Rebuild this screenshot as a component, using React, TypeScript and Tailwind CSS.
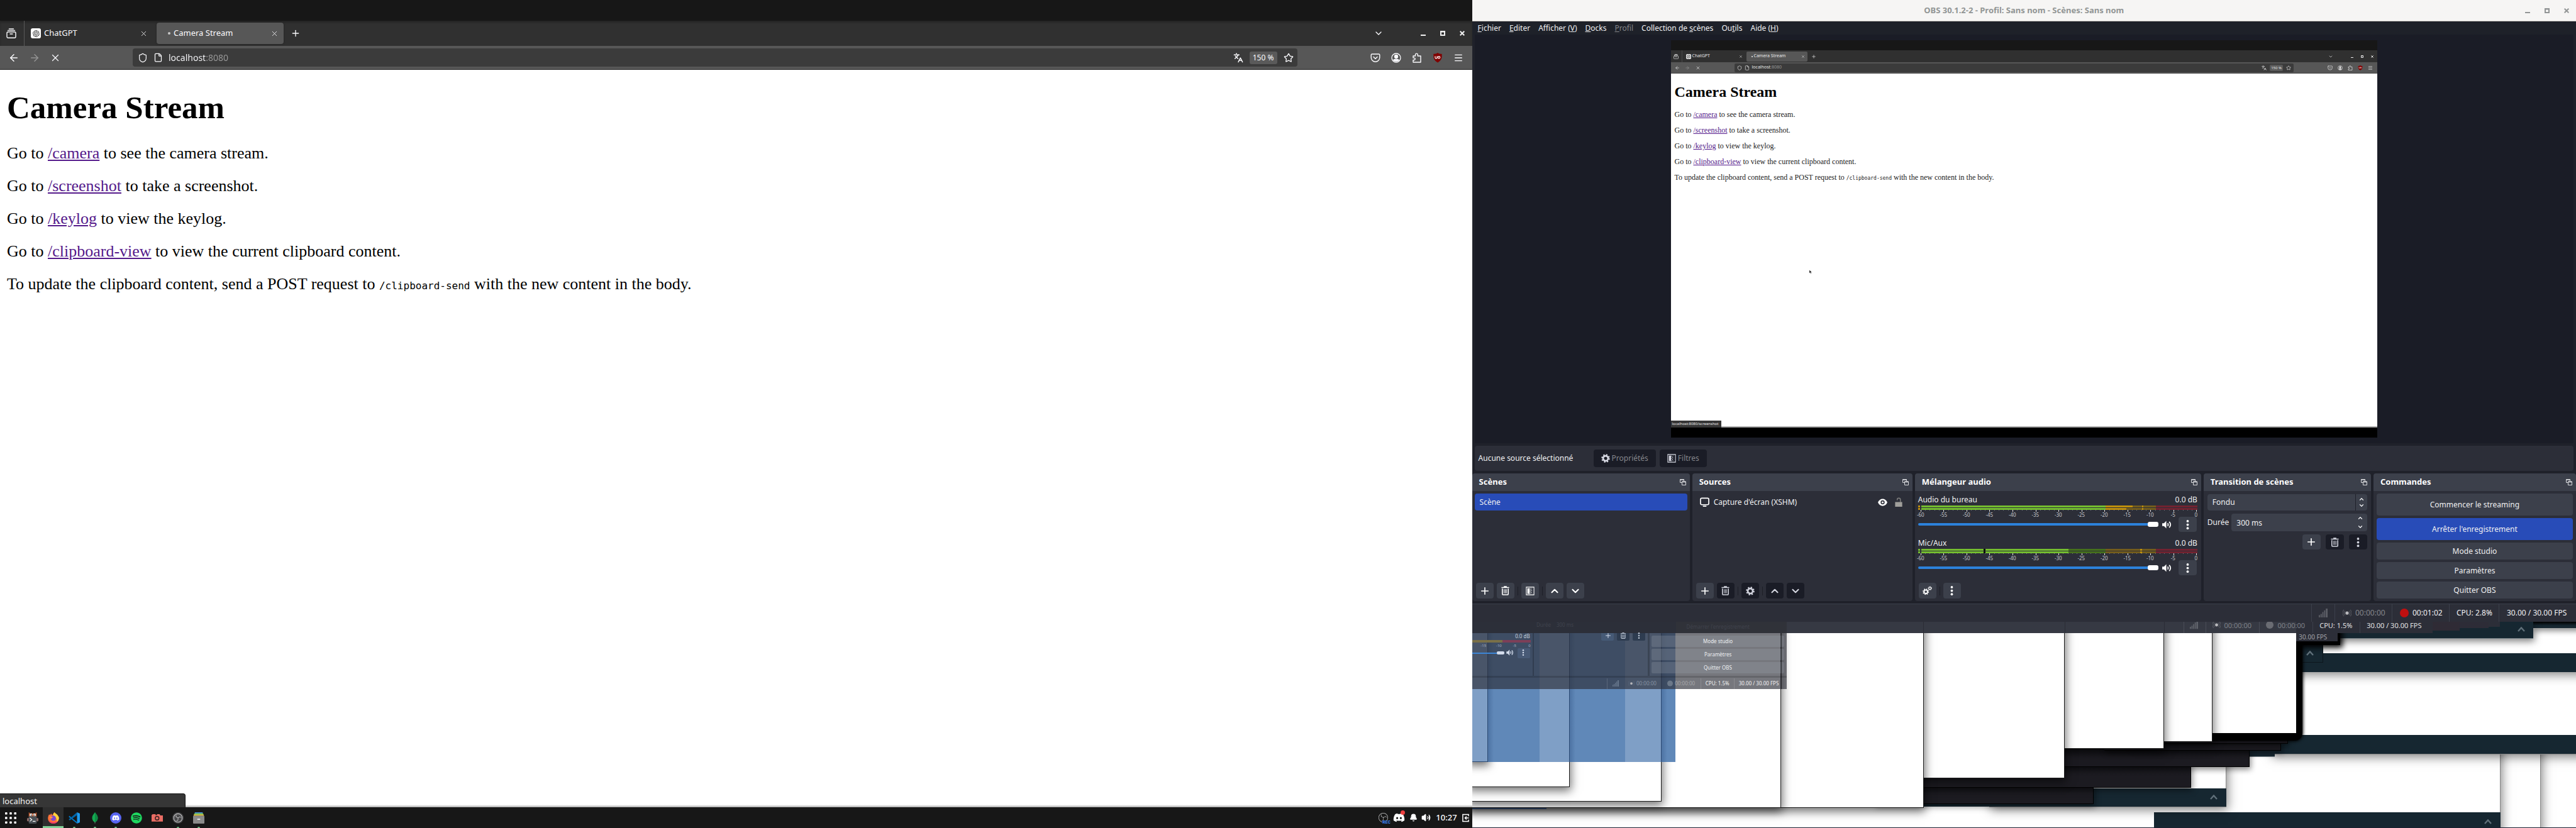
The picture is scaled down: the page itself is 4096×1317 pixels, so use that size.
import React from "react";
import {
  ArrowLeft, ArrowRight, X, Plus, Shield, File, ChevronDown, ChevronUp, Languages, Star, Menu,
  Bell, Volume2,
} from "lucide-react";
import { FaDiscord, FaSpotify } from "react-icons/fa";
import { SiObsstudio } from "react-icons/si";
import { RiOpenaiFill } from "react-icons/ri";

type P = { className?: string };
const noop = () => {};

/* ---------- small drawings ---------- */

const FirefoxView = ({ className = "" }: P) => (
  <svg viewBox="0 0 16 16" className={className} fill="none" stroke="currentColor" strokeWidth="1.4" strokeLinecap="round">
    <path d="M4.5 1h7M2.5 3.4h11" />
    <rect x="1" y="5.8" width="14" height="9.5" rx="2" />
    <path d="M6 9h4" />
  </svg>
);

const Pocket = ({ className = "" }: P) => (
  <svg viewBox="0 0 16 16" className={className} fill="none" stroke="currentColor" strokeWidth="1.4" strokeLinecap="round" strokeLinejoin="round">
    <path d="M2.5 2h11a1.3 1.3 0 0 1 1.3 1.3V7.5a6.8 6.8 0 0 1-13.6 0V3.3A1.3 1.3 0 0 1 2.5 2z" />
    <path d="M5 6.500l3 3 3-3" />
  </svg>
);

const Account = ({ className = "" }: P) => (
  <svg viewBox="0 0 16 16" className={className} fill="none" stroke="currentColor" strokeWidth="1.3">
    <circle cx="8" cy="8" r="7" />
    <circle cx="8" cy="6" r="2.5" fill="currentColor" />
    <path d="M3.8 11.5c1-1.8 7.400-1.8 8.400 0-1.8 2.2-6.600 2.2-8.400 0z" fill="currentColor" />
  </svg>
);

const Extension = ({ className = "" }: P) => (
  <svg viewBox="0 0 16 16" className={className} fill="none" stroke="currentColor" strokeWidth="1.4" strokeLinejoin="round">
    <path d="M2 5h3.500V3a1.900 1.900 0 0 1 3.800 0v2H14v10H2v-3.500h1.500a1.700 1.700 0 0 0 0-3.400H2z" />
  </svg>
);

const UBlock = ({ className = "" }: P) => (
  <svg viewBox="0 0 16 18" className={className}>
    <path d="M8 0c2.400 1.700 5 2.100 7.500 2.100 0 7.400 0 11-7.500 15.400C.5 13.100.5 9.500.5 2.100 3 2.100 5.600 1.700 8 0z" fill="#800000" />
    <path d="M3.500 6v2.600a1.700 1.700 0 0 0 3.400 0V6" fill="none" stroke="#fff" strokeWidth="1.3" />
    <circle cx="10.300" cy="8.200" r="1.900" fill="none" stroke="#fff" strokeWidth="1.3" />
  </svg>
);

const WinButtons = ({ className = "", small = false }: { className?: string; small?: boolean }) => (
  <div className={`flex items-center ${className}`}>
    {["Réduire", "Agrandir", "Fermer"].map((n, i) => (
      <button key={n} aria-label={n} className={small ? "w-4 flex justify-center" : "w-[31px] flex justify-center"}>
        <svg viewBox="0 0 8 8" className={small ? "w-1 h-1" : "w-2 h-2"} fill="none" stroke="currentColor" strokeWidth="2">
          {i === 0 && <path d="M0 7h8" />}
          {i === 1 && <path d="M1 1h6v6H1zM1 1.500h6" />}
          {i === 2 && <path d="M.7.7l6.600 6.600M7.300.7L.7 7.300" />}
        </svg>
      </button>
    ))}
  </div>
);

const Gear = ({ className = "" }: P) => (
  <svg viewBox="0 0 16 16" className={className}>
    <circle cx="8" cy="8" r="4.500" fill="none" stroke="currentColor" strokeWidth="3" />
    <circle cx="8" cy="8" r="6.600" fill="none" stroke="currentColor" strokeWidth="2.400" strokeDasharray="2.600 2.584" />
  </svg>
);

const Gears = ({ className = "" }: P) => (
  <svg viewBox="0 0 16 16" className={className} fill="none" stroke="currentColor">
    <circle cx="5.500" cy="9.800" r="3" strokeWidth="2" />
    <circle cx="5.500" cy="9.800" r="4.600" strokeWidth="1.600" strokeDasharray="1.800 1.813" />
    <circle cx="12.500" cy="4" r="2" strokeWidth="1.300" />
    <circle cx="12.500" cy="4" r="3" strokeWidth="1" strokeDasharray="1.200 1.156" />
  </svg>
);

const Filter = ({ className = "" }: P) => (
  <svg viewBox="0 0 16 16" className={className} fill="currentColor">
    <path d="M1 1h14v14H1z" fill="none" stroke="currentColor" strokeWidth="1.200" />
    <path d="M3 3h4v10H3z" />
    <path d="M7.500 3h1v2h-1zM7.500 7h1v2h-1zM7.500 11h1v2h-1zM9 5h1v2H9zM9 9h1v2H9zM10.500 3h1v1h-1zM10.500 7h1v1h-1zM10.500 11h1v1h-1z" />
  </svg>
);

const Trash = ({ className = "" }: P) => (
  <svg viewBox="0 0 16 16" className={className} fill="none" stroke="currentColor">
    <path d="M1.500 2.600h13M5.500 1h5" strokeWidth="1.600" />
    <path d="M3 4.500v9a1.500 1.500 0 0 0 1.500 1.500h7a1.500 1.500 0 0 0 1.500-1.500v-9" strokeWidth="1.700" />
    <path d="M6 5.500v7M8 5.500v7M10 5.500v7" strokeWidth="1" />
  </svg>
);

const Dots = ({ className = "" }: P) => (
  <svg viewBox="0 0 16 16" className={className} fill="currentColor">
    <circle cx="8" cy="2" r="2" /><circle cx="8" cy="8" r="2" /><circle cx="8" cy="14" r="2" />
  </svg>
);

const Popout = ({ className = "" }: P) => (
  <svg viewBox="0 0 10 10" className={className} fill="none" stroke="#d8d9dc" strokeWidth="1">
    <path d="M3.500 5.500h-3v-5h6v3" /><path d="M.5 1h6" strokeWidth="1.500" />
    <path d="M3.500 4h6v5.500h-6z" /><path d="M3.500 4.500h6" strokeWidth="1.500" />
  </svg>
);

const Speaker = ({ className = "" }: P) => (
  <svg viewBox="0 0 16 14" className={className}>
    <path d="M0 4.500h3L7 .5v13L3 9.500H0z" fill="currentColor" />
    <path d="M9.300 4.500c1 1.500 1 3.500 0 5M12 2c2.600 3 2.600 7 0 10" fill="none" stroke="currentColor" strokeWidth="1.900" />
  </svg>
);

const Signal = ({ className = "" }: P) => (
  <svg viewBox="0 0 15 15" className={className} fill="currentColor">
    <path d="M0 11h2v4H0zM3 9h2v6H3zM6 6h2v9H6zM9 3h2v12H9zM12 0h3v15h-3z" />
  </svg>
);

const Broadcast = ({ className = "" }: P) => (
  <svg viewBox="0 0 16 16" className={className} fill="none" stroke="currentColor" strokeWidth="1.300">
    <circle cx="8" cy="8" r="3" fill="#b8b8bc" stroke="none" />
    <path d="M4.500 4c-2 2.300-2 5.700 0 8M11.500 4c2 2.300 2 5.700 0 8M2.200 2c-2.900 3.500-2.900 8.500 0 12M13.800 2c2.900 3.500 2.900 8.500 0 12" />
  </svg>
);

/* ---------- the web page shown in the browser ---------- */

const routes = [
  { href: "/camera", rest: " to see the camera stream." },
  { href: "/screenshot", rest: " to take a screenshot." },
  { href: "/keylog", rest: " to view the keylog." },
  { href: "/clipboard-view", rest: " to view the current clipboard content." },
];

function Page({ mini = false }: { mini?: boolean }) {
  return (
    <main
      className={
        mini
          ? "flex-1 min-h-0 bg-white text-[#222] px-[6px] pt-[14px] font-['Liberation_Serif',serif] text-[12px] leading-[15px]"
          : "flex-1 min-h-0 bg-white text-black px-[11px] pt-[30px] font-['Liberation_Serif',serif] text-[26px] leading-[30px]"
      }
    >
      <h1 className={mini ? "text-black font-bold text-[24px] leading-[30px] mb-[14px]" : "font-bold text-[51px] leading-[60px] mb-[28px]"}>
        Camera Stream
      </h1>
      <div className={mini ? "flex flex-col gap-[10px]" : "flex flex-col gap-[22px]"}>
        {routes.map((r) => (
          <p key={r.href}>
            Go to <a href={r.href} className="text-[#551a8b] underline">{r.href}</a>{r.rest}
          </p>
        ))}
        <p>
          To update the clipboard content, send a POST request to{" "}
          <code className={mini ? "font-['DejaVu_Sans_Mono',monospace] text-[8px]" : "font-['DejaVu_Sans_Mono',monospace] text-[16px]"}>/clipboard-send</code>{" "}
          with the new content in the body.
        </p>
      </div>
    </main>
  );
}

/* ---------- left monitor: browser and taskbar ---------- */

function Browser() {
  return (
    <section className="flex flex-col min-w-0 min-h-0 overflow-hidden text-[13px] text-[#fbfbfe]">
      <div className="h-[33px] bg-[#171717]" />
      <div className="h-10 bg-[#303030] flex items-stretch shadow-[inset_0_3px_3px_#262626]">
        <button aria-label="Firefox View" className="w-[39px] pr-[3px] border-r border-[#5a5a5a] flex items-center justify-center">
          <FirefoxView className="w-4 h-4" />
        </button>
        <div className="w-[206px] pl-[10px] pr-[10px] flex items-center">
          <span className="w-4 h-4 rounded-[3px] bg-white text-[#333] flex items-center justify-center"><RiOpenaiFill className="w-[13px] h-[13px]" /></span>
          <span className="ml-[5px] flex-1">ChatGPT</span>
          <button aria-label="Fermer l'onglet"><X className="w-[13px] h-[13px]" strokeWidth={1.5} /></button>
        </div>
        <div className="w-[202px] my-[3px] ml-1 pl-[18px] pr-2 rounded bg-[#575757] shadow-[0_0_3px_#222] flex items-center">
          <span className="w-1 h-1 rounded-full bg-[#c9c9c9]" />
          <span className="ml-[5px] flex-1">Camera Stream</span>
          <button aria-label="Fermer l'onglet"><X className="w-[13px] h-[13px]" strokeWidth={1.5} /></button>
        </div>
        <button aria-label="Nouvel onglet" className="ml-[11px] self-center"><Plus className="w-4 h-4" strokeWidth={2} /></button>
        <div className="flex-1" />
        <button aria-label="Lister les onglets" className="mr-[48px] self-center"><ChevronDown className="w-4 h-4" strokeWidth={2} /></button>
        <WinButtons className="text-[#f0f0f0]" />
      </div>
      <div className="h-[38px] bg-[#575757] border-b border-[#1c1c1c] flex items-center">
        <button aria-label="Précédent" className="ml-[13px]"><ArrowLeft className="w-[18px] h-[18px]" strokeWidth={2} /></button>
        <button aria-label="Suivant" className="ml-[15px] text-[#949494]"><ArrowRight className="w-[18px] h-[18px]" strokeWidth={2} /></button>
        <button aria-label="Arrêter" className="ml-[15px]"><X className="w-[18px] h-[18px]" strokeWidth={1.6} /></button>
        <div className="ml-[114px] flex-1 h-[29px] rounded bg-[#3b3b3b] flex items-center pl-2">
          <Shield className="w-4 h-4" strokeWidth={1.8} />
          <File className="ml-[9px] w-[15px] h-[15px]" strokeWidth={2} />
          <input
            aria-label="Adresse"
            value="localhost:8080"
            onChange={noop}
            className="ml-[9px] flex-1 outline-none text-[14px] text-transparent bg-clip-text bg-[linear-gradient(to_right,#fbfbfe_59px,#9a9a9a_59px)]"
          />
          <button aria-label="Traduire" className="mr-[10px]"><Languages className="w-4 h-4" strokeWidth={2.2} /></button>
          <button className="w-11 h-5 rounded-[3px] bg-[#5a5a5a] text-[12px] leading-5">150 %</button>
          <button aria-label="Marque-page" className="ml-[10px] mr-[6px]"><Star className="w-4 h-4" strokeWidth={2} /></button>
        </div>
        <div className="ml-[116px] flex items-center gap-[17px] pr-[14px]">
          <button aria-label="Pocket"><Pocket className="w-4 h-4" /></button>
          <button aria-label="Compte"><Account className="w-4 h-4" /></button>
          <button aria-label="Extensions"><Extension className="w-4 h-4" /></button>
          <button aria-label="uBlock"><UBlock className="w-4 h-4" /></button>
          <button aria-label="Menu"><Menu className="w-4 h-4" strokeWidth={2} /></button>
        </div>
      </div>
      <Page />
      <div className="h-[22px] bg-white flex">
        <div className="w-[295px] bg-[#363636] border-t border-r border-[#111] rounded-tr px-1 text-[13px] leading-[22px] text-[#f4f4f4]">localhost</div>
        <div className="flex-1 self-end h-1 bg-[linear-gradient(#fff,#aaa)]" />
      </div>
      <Taskbar />
    </section>
  );
}

function Taskbar() {
  const cell = "relative w-[33px] h-full flex items-center justify-center";
  const dot = <span className="absolute bottom-0 left-[15px] w-1 h-[2px] rounded-t bg-[#6cc287]" />;
  return (
    <nav className="h-[33px] bg-[#171717] flex items-center">
      <button aria-label="Applications" className={cell}>
        <svg viewBox="0 0 20 20" className="w-[18px] h-[18px]" fill="#fff">
          {[0, 8, 16].map((y) => [0, 8, 16].map((x) => <rect key={x + "-" + y} x={x} y={y} width="4" height="4" rx="1" />))}
        </svg>
      </button>
      <button aria-label="Terminal" className={cell + " ml-[2px]"}>
        <svg viewBox="0 0 20 20" className="w-[18px] h-[18px]">
          <path d="M3 0l3 2h8l3-2v8H3z" fill="#b5552b" />
          <circle cx="7" cy="4.500" r="2.400" fill="#fff" /><circle cx="13" cy="4.500" r="2.400" fill="#fff" />
          <circle cx="7.500" cy="5" r="1" fill="#222" /><circle cx="12.500" cy="5" r="1" fill="#222" />
          <circle cx="2.500" cy="13" r="3" fill="#8d6a66" /><circle cx="17.500" cy="13" r="3" fill="#8d6a66" />
          <rect x="3" y="7" width="14" height="13" rx="1.500" fill="#4b5156" />
          <path d="M5 10l3.500 3L5 16M10 16h5" stroke="#fff" strokeWidth="1.300" fill="none" />
        </svg>
      </button>
      <button aria-label="Firefox" className={cell + " bg-[#2e2e2e] border-b-[3px] border-[#7fcf95] pt-[3px]"}>
        <svg viewBox="0 0 20 20" className="w-[18px] h-[18px]">
          <path d="M12 0c1 2 6 4 7.500 9 1 6-4 11-9.500 11S0 16 .3 10C.5 7 1.500 5 2.500 3.500L4 5l2-3c.5 1.500 1 2.500 2.500 3C9 3 10 1 12 0z" fill="#ff7139" />
          <path d="M12 0c1 2 6 4 7.500 9 .5 4-1.500 7-4.500 9 2-4 1-8-3-10-2-1-2.500-2-2.500-3.500C10 3 10.500 1.200 12 0z" fill="#ffd43a" />
          <path d="M1 14c1.500 4 5 6 9 6 3.500 0 6.500-1.500 8-4.500-5 3-12 3.500-17-1.500z" fill="#f0316c" />
          <circle cx="9.700" cy="10.500" r="4.600" fill="#7a4bd1" />
          <path d="M3 8c3-1 5 0 6.500 1.500-1.500 0-2.500.5-2.500 1.500C5 11 3.500 10 3 8z" fill="#ff9640" />
        </svg>
      </button>
      <button aria-label="Visual Studio Code" className={cell}>
        <svg viewBox="0 0 20 20" className="w-[18px] h-[18px]">
          <path d="M1.500 6L15 17.500V20L.3 8z" fill="#0179cb" /><path d="M.3 12.500L15 0v5L2 14.500z" fill="#0065a9" />
          <path d="M15 0l5 2.200v15.600L15 20z" fill="#1f9cf0" />
        </svg>
        {dot}
      </button>
      <button aria-label="MongoDB Compass" className={cell}>
        <svg viewBox="0 0 20 20" className="w-[18px] h-[18px]">
          <path d="M10 0c3 4 5 6 5 10s-2.500 6.500-5 8c-2.500-1.500-5-4-5-8s2-6 5-10z" fill="#13aa52" />
          <path d="M10 0c3 4 5 6 5 10s-2.500 6.500-5 8z" fill="#0f8a43" /><path d="M9.600 17h.8v3h-.8z" fill="#8a8f86" />
        </svg>
        {dot}
      </button>
      <button aria-label="Discord" className={cell}>
        <span className="w-[18px] h-[18px] rounded-full bg-[#5865f2] flex items-center justify-center"><FaDiscord className="w-3 h-3 text-white" /></span>
        {dot}
      </button>
      <button aria-label="Spotify" className={cell}><FaSpotify className="w-[18px] h-[18px] text-[#1ed760]" /></button>
      <button aria-label="Capture" className={cell}>
        <svg viewBox="0 0 20 14" className="w-[18px] h-[13px]">
          <path d="M2 1h5v1.500h2L10 1h4l1.500 2H20v11H0V2.500z" fill="#e96d64" />
          <circle cx="9.800" cy="8" r="3.200" fill="none" stroke="#33201f" strokeWidth="1.600" />
        </svg>
      </button>
      <button aria-label="OBS" className={cell}>
        <span className="w-[18px] h-[18px] rounded-full bg-[#4a4a4c] flex items-center justify-center"><SiObsstudio className="w-[14px] h-[14px] text-white" /></span>
        {dot}
      </button>
      <button aria-label="Fichiers" className={cell}>
        <svg viewBox="0 0 20 20" className="w-[18px] h-[18px]">
          <path d="M3 0h14v2H3z" fill="#4a90d9" /><path d="M2 2h16v2H2z" fill="#7ed957" /><path d="M1 4h18v2H1z" fill="#ffd24a" />
          <rect y="6" width="20" height="14" rx="1" fill="#8a8a8a" /><path d="M7.500 11.500h5v1.600h-5z" fill="#fff" />
        </svg>
        {dot}
      </button>
      <div className="flex-1" />
      <div className="relative w-4 h-4">
        <SiObsstudio className="w-[15px] h-[15px] text-[#c9c9c9]" />
        <span className="absolute -bottom-[3px] left-[6px] text-[7px] leading-[7px] font-bold font-['Liberation_Mono',monospace] text-[#3d86ff] bg-[#171717]">REC</span>
      </div>
      <div className="relative ml-[7px]">
        <FaDiscord className="w-[19px] h-[19px] text-white" />
        <span className="absolute -top-[2px] right-0 w-[7px] h-[7px] rounded-full bg-[#ef4040]" />
      </div>
      <Bell className="ml-[7px] w-[13px] h-[13px]" fill="#fff" strokeWidth={2} />
      <Volume2 className="ml-[6px] w-[15px] h-[15px]" fill="#fff" strokeWidth={2} />
      <time className="ml-[8px] text-[13px] font-medium">10:27</time>
      <button aria-label="Fermer la session" className="ml-[8px] mr-[5px]">
        <svg viewBox="0 0 12 14" className="w-[11px] h-[14px]" fill="none" stroke="#fff" strokeWidth="1.600">
          <path d="M11 4V1H1v12h10v-3M11.500 7H5M7.500 4.300L4.800 7l2.700 2.700" />
        </svg>
      </button>
    </nav>
  );
}

/* ---------- captured desktop inside the preview ---------- */

function MiniBrowser() {
  return (
    <div className="relative h-full aspect-video flex flex-col overflow-hidden bg-black text-[7px] text-[#e8e8e8]">
      <div className="h-4 bg-[#171717]" />
      <div className="h-[19px] bg-[#303030] flex items-center">
        <span className="w-[18px] h-full border-r border-[#4a4a4a] flex items-center justify-center"><FirefoxView className="w-2 h-2" /></span>
        <span className="ml-[6px] w-2 h-2 rounded-[2px] bg-white text-[#333]"><RiOpenaiFill className="w-2 h-2" /></span>
        <span className="ml-[2px] w-[74px]">ChatGPT</span>
        <X className="w-[6px] h-[6px]" />
        <div className="ml-[6px] w-[97px] h-4 rounded-[2px] bg-[#575757] flex items-center pl-2 pr-1">
          <span className="w-[2px] h-[2px] bg-[#c9c9c9]" /><span className="ml-[2px] flex-1">Camera Stream</span><X className="w-[6px] h-[6px]" />
        </div>
        <Plus className="ml-[6px] w-2 h-2" />
        <span className="flex-1" />
        <ChevronDown className="w-2 h-2 mr-[22px]" />
        <WinButtons small />
      </div>
      <div className="h-[18px] bg-[#575757] border-b border-[#444] flex items-center">
        <ArrowLeft className="ml-[6px] w-2 h-2" /><ArrowRight className="ml-2 w-2 h-2 text-[#949494]" /><X className="ml-[9px] w-2 h-2" />
        <div className="ml-[54px] mr-[54px] flex-1 h-[14px] rounded-[2px] bg-[#3b3b3b] flex items-center pl-1">
          <Shield className="w-2 h-2" /><File className="ml-1 w-2 h-2" />
          <span className="ml-1 flex-1">localhost<span className="text-[#999]">:8080</span></span>
          <Languages className="w-2 h-2 mr-[5px]" />
          <span className="w-[21px] h-[10px] rounded-[2px] bg-[#5a5a5a] text-center leading-[10px] text-[6px]">150 %</span>
          <Star className="w-2 h-2 ml-[5px] mr-1" />
        </div>
        <div className="flex items-center gap-2 pr-[7px]">
          <Pocket className="w-2 h-2" /><Account className="w-2 h-2" /><Extension className="w-2 h-2" /><UBlock className="w-2 h-2" /><Menu className="w-2 h-2" />
        </div>
      </div>
      <Page mini />
      <div className="h-[11px] bg-white flex">
        <div className="min-w-20 bg-[#363636] px-[2px] text-[6px] leading-[11px] whitespace-nowrap">localhost:8080/screenshot</div>
        <div className="flex-1 self-end h-[2px] bg-[#aaa]" />
      </div>
      <div className="h-4 bg-black" />
      <svg viewBox="0 0 6 9" className="absolute left-[19.6%] top-[57.7%] w-1 h-[7px]"><path d="M0 0v7.500l2-1.500 1.500 3 1-.5-1.300-3H6z" fill="#111" stroke="#fff" strokeWidth=".4" /></svg>
    </div>
  );
}

/* ---------- OBS ---------- */

const menus: { pre: string; key: string; post: string; off?: boolean }[] = [
  { pre: "", key: "F", post: "ichier" },
  { pre: "", key: "E", post: "diter" },
  { pre: "Afficher (", key: "V", post: ")" },
  { pre: "", key: "D", post: "ocks" },
  { pre: "", key: "P", post: "rofil", off: true },
  { pre: "Collection de ", key: "s", post: "cènes" },
  { pre: "Ou", key: "t", post: "ils" },
  { pre: "Aide (", key: "H", post: ")" },
];

function Dock({ title, children }: { title: string; children: React.ReactNode }) {
  return (
    <section className="min-w-0 rounded overflow-hidden bg-[#2c2e38] flex flex-col">
      <header className="h-7 bg-[#3c404b] pl-[11px] pr-[6px] flex items-center justify-between">
        <h2 className="font-bold text-[13px] text-white whitespace-nowrap">{title}</h2>
        <button aria-label={"Détacher " + title}><Popout className="w-[10px] h-[10px]" /></button>
      </header>
      {children}
    </section>
  );
}

function Tool({ label, off = false, className = "w-7 h-[25px]", children }: { label: string; off?: boolean; className?: string; children: React.ReactNode }) {
  return (
    <button aria-label={label} className={`${className} rounded flex items-center justify-center ${off ? "bg-[#1a1c26] text-[#d0d2dc]" : "bg-[#3c404b] text-white"}`}>
      {children}
    </button>
  );
}
const Sep = () => <span className="w-px h-[14px] bg-[#1d1f27]" />;

const majors = [-60, -55, -50, -45, -40, -35, -30, -25, -20, -15, -10, -5, 0];
const G = "bg-[#74bd2f]", DG = "bg-[#456f1c]", Y = "bg-[#bf8f0c]", DY = "bg-[#735c1c]", DR = "bg-[#712331]", K = "bg-black";
type Seg = [number, string];
const channels: { name: string; peak: string; rows: Seg[][] }[] = [
  {
    name: "Audio du bureau", peak: Y,
    rows: [
      [[66.7, G], [9.8, Y], [3.4, DY], [0.6, Y], [4.6, DY], [14.9, DR]],
      [[66.7, G], [7.7, Y], [5.5, DY], [0.6, Y], [4.6, DY], [14.9, DR]],
    ],
  },
  {
    name: "Mic/Aux", peak: G,
    rows: [
      [[22.7, G], [0.6, K], [30, G], [13.4, DG], [12.6, DY], [0.6, Y], [5.2, DY], [14.9, DR]],
      [[22.7, G], [0.6, K], [30, G], [13.4, DG], [12.6, DY], [0.6, Y], [5.2, DY], [14.9, DR]],
    ],
  },
];

function Channel({ name, peak, rows }: (typeof channels)[number]) {
  return (
    <div className="h-[69px]">
      <div className="flex justify-between leading-[17px] h-[18px]">
        <span>{name}</span><span>0.0 dB</span>
      </div>
      <div className="flex flex-col gap-px">
        {rows.map((r, i) => (
          <div key={i} className="flex h-[3px]">
            <span className={`w-[3px] mr-[2px] ${peak}`} />
            <div className="flex-1 flex">
              {r.map(([w, c], j) => <span key={j} className={c} style={{ width: `${w}%` }} />)}
            </div>
          </div>
        ))}
      </div>
      <div className="ml-1 flex justify-between h-[3px]">
        {Array.from({ length: 61 }, (_, i) => <span key={i} className={i % 5 ? "w-px h-px bg-[#777a83]" : "w-px h-[3px] bg-[#e8e8e8]"} />)}
      </div>
      <div className="ml-1 mr-[2px] flex justify-between text-[8px] leading-[9px] text-[#c4c5c9]">
        {majors.map((m) => <span key={m} className="w-0 flex justify-center">{m}</span>)}
      </div>
      <div className="flex items-center h-[22px]">
        <input
          type="range" aria-label={"Volume " + name} value={100} onChange={noop}
          className="flex-1 min-w-0 h-1 mr-[6px] appearance-none rounded bg-[#2c82dc] [&::-webkit-slider-thumb]:appearance-none [&::-webkit-slider-thumb]:w-[17px] [&::-webkit-slider-thumb]:h-2 [&::-webkit-slider-thumb]:rounded-[3px] [&::-webkit-slider-thumb]:bg-white"
        />
        <button aria-label={"Muet " + name} className="mr-[11px]"><Speaker className="w-[15px] h-[13px] text-white" /></button>
        <Tool label={"Options " + name} className="w-[29px] h-6 mr-px"><Dots className="w-[15px] h-[15px]" /></Tool>
      </div>
    </div>
  );
}

const commands = [
  { t: "Commencer le streaming", c: "h-[35px] bg-[#3c404b]" },
  { t: "Arrêter l'enregistrement", c: "h-[35px] bg-[#284cb8]" },
  { t: "Mode studio", c: "h-[27px] bg-[#3c404b]" },
  { t: "Paramètres", c: "h-[27px] bg-[#3c404b]" },
  { t: "Quitter OBS", c: "h-[27px] bg-[#3c404b]" },
];

function Obs() {
  return (
    <section className="min-h-0 min-w-0 flex flex-col bg-[#1f212a] text-[12px] text-[#f0f0f2] overflow-hidden">
      <header className="h-[34px] bg-[#f6f5f4] border-b border-[#d5cfca] text-[#929595] grid grid-cols-[1fr_auto_1fr] items-center">
        <span />
        <h1 className="font-bold text-[13px]">OBS 30.1.2-2 - Profil: Sans nom - Scènes: Sans nom</h1>
        <WinButtons className="justify-end" />
      </header>
      <nav className="h-[21px] flex items-center gap-[13px] pl-[9px] bg-[#1e2129]">
        {menus.map((m) => (
          <button key={m.key + m.post} className={m.off ? "text-[#85868b]" : ""}>{m.pre}<u>{m.key}</u>{m.post}</button>
        ))}
      </nav>
      <div className="flex-1 min-h-0 mx-1 py-[9px] bg-[#1a1c26] flex justify-center"><MiniBrowser /></div>
      <div className="h-10 m-1 rounded bg-[#2c2e38] flex items-center pl-[6px]">
        <span className="w-[153px] mr-[30px] whitespace-nowrap">Aucune source sélectionné</span>
        <button className="h-7 px-3 mr-[6px] rounded bg-[#1a1c26] text-[#85868b] flex items-center gap-[3px]"><Gear className="w-[14px] h-[14px] text-[#d8dae4]" />Propriétés</button>
        <button className="h-7 px-3 rounded bg-[#1a1c26] text-[#85868b] flex items-center gap-[3px]"><Filter className="w-[14px] h-[14px] text-[#d8dae4]" />Filtres</button>
      </div>
      <div className="h-[203px] grid grid-cols-[346fr_350fr_455fr_266fr_322fr] gap-1">
        <Dock title="Scènes">
          <div className="flex-1 p-1"><button className="w-full h-[27px] pl-2 text-left rounded bg-[#284cb8]">Scène</button></div>
          <div className="flex items-center gap-[5px] px-[6px] pb-1">
            <Tool label="Ajouter une scène"><Plus className="w-[18px] h-[18px]" strokeWidth={2.2} /></Tool>
            <Tool label="Supprimer la scène"><Trash className="w-[15px] h-[15px]" /></Tool>
            <Sep />
            <Tool label="Filtres de scène"><Filter className="w-[14px] h-[14px]" /></Tool>
            <Sep />
            <Tool label="Monter la scène"><ChevronUp className="w-[18px] h-[18px]" strokeWidth={2.8} /></Tool>
            <Tool label="Descendre la scène"><ChevronDown className="w-[18px] h-[18px]" strokeWidth={2.8} /></Tool>
          </div>
        </Dock>
        <Dock title="Sources">
          <div className="flex-1 p-1">
            <div className="h-[27px] pl-2 pr-3 flex items-center">
              <svg viewBox="0 0 16 16" className="w-[15px] h-[15px]" fill="none" stroke="#fff" strokeWidth="1.800"><rect x="1" y="1.500" width="14" height="11" rx="2" /><path d="M5 15h6" /></svg>
              <span className="ml-[7px] flex-1">Capture d'écran (XSHM)</span>
              <button aria-label="Visibilité">
                <svg viewBox="0 0 16 12" className="w-[15px] h-3"><path d="M0 6c3-8 13-8 16 0-3 8-13 8-16 0z" fill="#fff" /><circle cx="8" cy="6" r="3.400" fill="#2c2e38" /><circle cx="8" cy="6" r="1.700" fill="#fff" /></svg>
              </button>
              <button aria-label="Verrouiller" className="ml-[12px]">
                <svg viewBox="0 0 12 16" className="w-3 h-[15px]"><path d="M0 8h12v8H0z" fill="#a09f9b" /><path d="M3.500 5V4a2.700 2.700 0 0 1 5.400 0v4.500" fill="none" stroke="#7d7d7c" strokeWidth="1.600" /></svg>
              </button>
            </div>
          </div>
          <div className="flex items-center gap-[5px] px-[6px] pb-1">
            <Tool label="Ajouter une source"><Plus className="w-[18px] h-[18px]" strokeWidth={2.2} /></Tool>
            <Tool off label="Supprimer la source"><Trash className="w-[15px] h-[15px]" /></Tool>
            <Sep />
            <Tool off label="Propriétés de la source"><Gear className="w-[14px] h-[14px]" /></Tool>
            <Sep />
            <Tool off label="Monter la source"><ChevronUp className="w-[18px] h-[18px]" strokeWidth={2.8} /></Tool>
            <Tool off label="Descendre la source"><ChevronDown className="w-[18px] h-[18px]" strokeWidth={2.8} /></Tool>
          </div>
        </Dock>
        <Dock title="Mélangeur audio">
          <div className="flex-1 pl-[5px] pr-[6px] pt-[5px]">{channels.map((c) => <Channel key={c.name} {...c} />)}</div>
          <div className="flex items-center gap-[5px] px-[6px] pb-1">
            <Tool label="Réglages audio avancés"><Gears className="w-[15px] h-[15px]" /></Tool>
            <Sep />
            <Tool label="Options du mélangeur"><Dots className="w-[15px] h-[15px]" /></Tool>
          </div>
        </Dock>
        <Dock title="Transition de scènes">
          <div className="px-[6px] pt-[5px] flex flex-col gap-[5px]">
            <div className="relative h-[26px]">
              <select aria-label="Transition" className="w-full h-full pl-2 rounded bg-[#3c404b] appearance-none"><option>Fondu</option></select>
              <div className="absolute right-0 inset-y-0 w-[19px] border-l border-[#1f212a] flex flex-col items-center justify-center pointer-events-none">
                <ChevronUp className="w-[10px] h-[10px]" strokeWidth={3} /><ChevronDown className="w-[10px] h-[10px]" strokeWidth={3} />
              </div>
            </div>
            <div className="relative h-7 flex items-center gap-1">
              <label htmlFor="duree">Durée</label>
              <input id="duree" value="300 ms" onChange={noop} className="flex-1 min-w-0 h-full pl-2 rounded bg-[#3c404b]" />
              <div className="absolute right-[6px] inset-y-0 flex flex-col items-center justify-center gap-1 pointer-events-none">
                <ChevronUp className="w-[10px] h-[10px]" strokeWidth={3} /><ChevronDown className="w-[10px] h-[10px]" strokeWidth={3} />
              </div>
            </div>
            <div className="flex justify-end gap-2">
              <Tool label="Ajouter une transition" className="w-[29px] h-6"><Plus className="w-[18px] h-[18px]" strokeWidth={2.2} /></Tool>
              <Tool off label="Supprimer la transition" className="w-[29px] h-6"><Trash className="w-[15px] h-[15px]" /></Tool>
              <Tool off label="Options de transition" className="w-[29px] h-6"><Dots className="w-[15px] h-[15px]" /></Tool>
            </div>
          </div>
        </Dock>
        <Dock title="Commandes">
          <div className="px-[5px] pt-1 flex flex-col gap-1">
            {commands.map((c) => <button key={c.t} className={`rounded ${c.c}`}>{c.t}</button>)}
          </div>
        </Dock>
      </div>
      <footer className="mt-1 h-[29px] bg-[#2c2e38] border-t border-[#3c404b] flex justify-end items-stretch *:border-l *:border-[#3c404b] *:flex *:items-center">
        <span className="w-[37px] justify-center text-[#5c5e66]"><Signal className="w-[14px] h-[14px]" /></span>
        <span className="w-[91px] pl-3 gap-[6px] text-[#85868b]"><Broadcast className="w-[14px] h-[14px] text-[#55575f]" />00:00:00</span>
        <span className="w-[91px] pl-3 gap-[6px]"><i className="w-[14px] h-[14px] rounded-full bg-[#c01010]" />00:01:02</span>
        <span className="w-[79px] pl-[11px]">CPU: 2.8%</span>
        <span className="w-[123px] pl-[12px]">30.00 / 30.00 FPS</span>
      </footer>
    </section>
  );
}

/* ---------- window trails left on the unused part of the second monitor ---------- */

const box = (x: number, y: number, w: number, h: number) => ({
  left: `${(x / 1920) * 100}%`, top: `${(y / 358) * 100}%`, width: `${(w / 1920) * 100}%`, height: `${(h / 358) * 100}%`,
});
const at = (x: number, y: number) => ({ left: `${(x / 1920) * 100}%`, top: `${(y / 358) * 100}%` });

const WHITE = "bg-white border-r border-b border-[#888] shadow-[2px_4px_16px_rgba(0,0,0,0.5)]";
const SHEET = "bg-white border-r border-b border-[#1c1c1c] shadow-[2px_6px_14px_rgba(0,0,0,0.55)]";
const NAVY = "bg-[#162731]";
const INK = "bg-[linear-gradient(#121216,#1c1b21_50%)] border-r border-b border-black shadow-[2px_4px_10px_rgba(0,0,0,0.45)]";

const trails: [number, number, number, number, string][] = [
  [0, 0, 1859, 400, WHITE],
  [0, 0, 1789, 400, WHITE],
  [1186, 331, 603, 30, NAVY],
  [900, 0, 412, 322, WHITE],
  [700, 289, 612, 32, NAVY],
  [1390, 20, 600, 210, WHITE],
  [1390, 197, 600, 32, NAVY],
  [1352, 200, 44, 35, NAVY + " border-b border-[#7a848a]"],
  [1420, 0, 600, 87, WHITE],
  [1420, 55, 600, 32, NAVY],
  [1846, 0, 100, 11, "bg-[linear-gradient(#000,#162731_60%)] shadow-[0_4px_10px_rgba(0,0,0,0.5)]"],
  [1480, 0, 366, 29, NAVY + " border-b border-[#7a848a] shadow-[2px_4px_12px_rgba(0,0,0,0.5)]"],
  [1420, 20, 60, 51, "bg-[#162731] border-r border-b border-[#0c161c]"],
  [700, 280, 381, 37, INK],
  [700, 245, 551, 43, INK],
  [1000, 220, 352, 32, INK],
  [1100, 209, 307, 15, INK],
  [1200, 190, 219, 22, INK],
  [1433, 14, 77, 26, "bg-black shadow-[0_0_10px_4px_#000]"],
  [1280, 20, 164, 186, "bg-black rounded-br-xl shadow-[0_0_5px_1px_#000]"],
  [1433, 14, 73, 20, "bg-[#2c2e38]"],
];

const sheets: [number, number, number, number, string][] = [
  [1200, -10, 233, 203, "bg-white"],
  [1150, -10, 138, 218, SHEET],
  [1000, -10, 204, 230, SHEET],
  [760, -10, 271, 282, SHEET],
  [-10, -10, 796, 333, SHEET],
  [-10, -10, 548, 333, SHEET],
  [-10, -10, 340, 322, SHEET],
  [-10, -10, 180, 297, SHEET],
  [-10, -10, 38, 253, SHEET],
  [0, 323, 129, 2, "bg-[#1d2c44]"],
];

const tint: [number, number, number, number, string][] = [
  [0, 0, 354, 243, "bg-[#6088b8]"],
  [0, 0, 28, 243, "bg-[#7f9fc6] border-r border-b border-[#2c4a72]"],
  [28, 0, 10, 243, "bg-[linear-gradient(to_right,#4d73a3,#6088b8)]"],
  [118, 0, 52, 243, "bg-[#7f9fc6] border-r border-[#2c4a72]"],
  [170, 0, 10, 243, "bg-[linear-gradient(to_right,#4d73a3,#6088b8)]"],
  [266, 0, 64, 243, "bg-[#7f9fc6] border-r border-[#2c4a72]"],
  [330, 0, 10, 243, "bg-[linear-gradient(to_right,#4d73a3,#6088b8)]"],
  [0, 0, 547, 117, "bg-[#2c2e38]/65"],
  [0, 94, 547, 3, "bg-black/15"],
  [105, 20, 3, 74, "bg-black/20"],
  [306, 20, 3, 74, "bg-black/20"],
  [0, 32, 53, 4, "bg-[#7a7048]"],
  [53, 32, 49, 4, "bg-[#7d3f58]"],
  [0, 53, 44, 3, "bg-[#3d86d6]"],
  [43, 51, 13, 6, "bg-[#d3dcec] rounded-[2px]"],
  [79, 46, 22, 17, "bg-[#485a76] rounded-[2px]"],
  [225, 14, 22, 19, "bg-[#465a76] rounded-[2px]"],
  [252, 14, 22, 19, "bg-[#2e3c50] rounded-[2px]"],
  [279, 14, 22, 19, "bg-[#2e3c50] rounded-[2px]"],
  [312, 24, 231, 20, "bg-[#a0a8b4]/25 rounded-[2px]"],
  [312, 47, 231, 20, "bg-[#a0a8b4]/25 rounded-[2px]"],
  [312, 70, 231, 20, "bg-[#a0a8b4]/25 rounded-[2px]"],
  [235, 98, 312, 19, "border-l border-white/15"],
  [397, 98, 150, 19, "border-l border-white/15"],
  [455, 98, 92, 19, "border-l border-white/15"],
  [537, 20, 1, 97, "bg-black/50"],
  [0, 0, 1671, 20, "bg-[#363943]"],
  [0, 0, 355, 20, "bg-[#2c2f39]"],
  [355, 0, 192, 20, "bg-[#303239]"],
  [785, 0, 1, 20, "bg-[#2a2c35]"],
  [1031, 0, 1, 20, "bg-[#2a2c35]"],
  [1204, 0, 1, 20, "bg-[#2a2c35]"],
  [1433, 0, 238, 20, "bg-[#2c2e38]"],
  [1671, 0, 47, 15, "bg-[#2f2b35]"],
  [1718, 0, 50, 11, "bg-[#2d2c37]"],
  [1768, 0, 20, 9, "bg-[#2c2e38]"],
  [1237, 0, 1, 20, "bg-[#4a4d57]"],
  [1276, 0, 1, 20, "bg-[#4a4d57]"],
  [1369, 0, 1, 20, "bg-[#4a4d57]"],
  [1462, 0, 1, 20, "bg-[#3c404b]"],
  [1544, 0, 1, 20, "bg-[#3c404b]"],
];

const labels: [number, number, string, string][] = [
  [75, 25, "0.0 dB", "text-[8px] text-[#c8d0dc]"],
  [15, 41, "-15", "text-[6px] text-[#a8b4c4]"],
  [42, 41, "-10", "text-[6px] text-[#a8b4c4]"],
  [71, 41, "-5", "text-[6px] text-[#a8b4c4]"],
  [98, 41, "0", "text-[6px] text-[#a8b4c4]"],
  [402, 34, "Mode studio", "text-[8px] text-[#eef0f2]"],
  [404, 57, "Paramètres", "text-[8px] text-[#eef0f2]"],
  [403, 80, "Quitter OBS", "text-[8px] text-[#eef0f2]"],
  [286, 107, "00:00:00", "text-[8px] text-[#8793a3]"],
  [353, 107, "00:00:00", "text-[8px] text-[#a8a9ac]"],
  [406, 107, "CPU: 1.5%", "text-[8px] text-[#f2f2f2]"],
  [464, 107, "30.00 / 30.00 FPS", "text-[8px] text-[#f2f2f2]"],
  [112, 6, "Durée", "text-[8px] text-[#40434d]"],
  [147, 6, "300 ms", "text-[8px] text-[#40434d]"],
  [373, 9, "Démarrer l'enregistrement", "text-[8px] text-[#40434d]"],
  [1308, 6, "00:00:00", "text-[11px] text-[#7f8188]"],
  [1401, 6, "00:00:00", "text-[11px] text-[#7f8188]"],
  [1474, 6, "CPU: 1.5%", "text-[11px] text-[#e0e0e2]"],
  [1556, 6, "30.00 / 30.00 FPS", "text-[11px] text-[#e0e0e2]"],
];

const glyphs: [number, number, React.ReactNode][] = [
  [59, 54, <Speaker className="w-3 h-[10px] text-[#d3dcec]" />],
  [84, 54, <Dots className="w-[10px] h-[10px] text-[#d3dcec]" />],
  [230, 24, <Plus className="w-3 h-3 text-[#d3dcec]" />],
  [258, 24, <Trash className="w-[10px] h-[10px] text-[#c0cad8]" />],
  [285, 24, <Dots className="w-[10px] h-[10px] text-[#c0cad8]" />],
  [244, 107, <Signal className="w-[10px] h-[10px] text-[#65758a]" />],
  [272, 107, <Broadcast className="w-[10px] h-[10px] text-[#56657a]" />],
  [339, 107, <span className="block w-[9px] h-[9px] rounded-full bg-[#6b7889]" />],
  [1248, 6, <Signal className="w-[13px] h-[13px] text-[#60636b]" />],
  [1288, 6, <Broadcast className="w-[13px] h-[13px] text-[#5a5d66]" />],
  [1381, 6, <span className="block w-3 h-3 rounded-full bg-[#6a6c73]" />],
];

const carets: [number, number][] = [[1818, 13], [1451, 55], [1283, 305], [1760, 347]];

function Desktop() {
  const rects = (list: [number, number, number, number, string][]) =>
    list.map(([x, y, w, h, c], i) => <div key={i} className={`absolute ${c}`} style={box(x, y, w, h)} />);
  return (
    <section aria-label="Bureau" className="relative min-h-0 overflow-hidden bg-white">
      {rects(trails)}
      {rects(sheets)}
      {rects(tint)}
      <div className="absolute -translate-y-1/2 text-[10px] leading-none text-[#a0a1a6] whitespace-nowrap" style={at(1438, 26)}>30.00 FPS</div>
      {carets.map(([x, y]) => (
        <svg key={x} viewBox="0 0 12 8" className="absolute w-3 h-2 -translate-y-1/2" style={at(x, y)}><path d="M1 7l5-5.500L11 7" fill="none" stroke="#60707a" strokeWidth="2.400" /></svg>
      ))}
      {labels.map(([x, y, t, c]) => (
        <div key={x + "/" + y} className={`absolute -translate-y-1/2 leading-none whitespace-nowrap ${c}`} style={at(x, y)}>{t}</div>
      ))}
      {glyphs.map(([x, y, g]) => (
        <div key={x + "/" + y} className="absolute -translate-y-1/2" style={at(x, y)}>{g}</div>
      ))}
      <div className="absolute bottom-0 inset-x-0 h-px bg-[#1b2030]" />
    </section>
  );
}

export default function App() {
  return (
    <div className="h-screen grid grid-cols-[4fr_3fr] overflow-hidden font-['Noto_Sans',sans-serif]">
      <Browser />
      <div className="min-w-0 min-h-0 grid grid-rows-[989fr_328fr]">
        <Obs />
        <Desktop />
      </div>
    </div>
  );
}
